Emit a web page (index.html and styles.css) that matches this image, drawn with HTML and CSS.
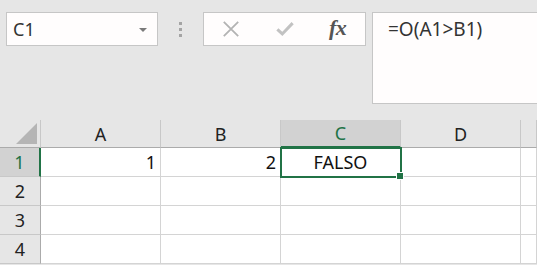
FILE: index.html
```html
<!DOCTYPE html>
<html lang="es">
<head>
    <meta charset="UTF-8">
    <title>Hoja de cálculo</title>
    <link rel="stylesheet" href="styles.css">
</head>
<body>
    <div class="toolbar">
        <div class="name-box">
            <span class="name-value">C1</span>
            <span class="name-arrow"></span>
        </div>
        <div class="grip">
            <span></span><span></span><span></span>
        </div>
        <div class="buttons">
            <svg class="btn-icon" viewBox="0 0 20 20">
                <path d="M2 2 L18 18 M18 2 L2 18" stroke="#b3b3b3" stroke-width="2" fill="none"/>
            </svg>
            <svg class="btn-icon" viewBox="0 0 20 20">
                <path d="M1.5 10.5 L7 15.5 L18.5 3.5" stroke="#c2c2c2" stroke-width="3.4" fill="none"/>
            </svg>
            <span class="fx">fx</span>
        </div>
        <div class="formula">=O(A1&gt;B1)</div>
    </div>

    <div class="sheet">
        <div class="corner"><span class="corner-mark"></span></div>
        <div class="col-head">A</div>
        <div class="col-head">B</div>
        <div class="col-head active">C</div>
        <div class="col-head">D</div>
        <div class="col-head"></div>

        <div class="row-head active">1</div>
        <div class="cell num">1</div>
        <div class="cell num">2</div>
        <div class="cell text selected">FALSO</div>
        <div class="cell"></div>
        <div class="cell"></div>

        <div class="row-head">2</div>
        <div class="cell"></div>
        <div class="cell"></div>
        <div class="cell"></div>
        <div class="cell"></div>
        <div class="cell"></div>

        <div class="row-head">3</div>
        <div class="cell"></div>
        <div class="cell"></div>
        <div class="cell"></div>
        <div class="cell"></div>
        <div class="cell"></div>

        <div class="row-head">4</div>
        <div class="cell"></div>
        <div class="cell"></div>
        <div class="cell"></div>
        <div class="cell"></div>
        <div class="cell"></div>
    </div>
</body>
</html>
```

FILE: styles.css
```css
* {
    margin: 0;
    padding: 0;
    box-sizing: border-box;
}

body {
    font-family: "Noto Sans", "Open Sans", sans-serif;
    background-color: #e6e6e6;
    color: #222;
    width: 537px;
    height: 265px;
    overflow: hidden;
}

/* formula toolbar */
.toolbar {
    display: flex;
    align-items: flex-start;
    height: 120px;
    padding: 12px 0 0 6px;
}

.name-box {
    width: 152px;
    height: 34px;
    background: #fffdfd;
    border: 1px solid #c6c6c6;
    display: flex;
    align-items: center;
    justify-content: space-between;
    padding: 0 10px 0 6px;
}

.name-value {
    font-size: 18px;
    color: #333;
}

.name-arrow {
    width: 0;
    height: 0;
    border-left: 4px solid transparent;
    border-right: 4px solid transparent;
    border-top: 4px solid #7a7a7a;
    margin-top: 2px;
}

.grip {
    width: 45px;
    height: 34px;
    display: flex;
    flex-direction: column;
    align-items: center;
    justify-content: center;
    gap: 3px;
}

.grip span {
    width: 3px;
    height: 3px;
    background: #a4a4a4;
}

.buttons {
    width: 163px;
    height: 34px;
    background: #fffdfd;
    border: 1px solid #c6c6c6;
    display: flex;
    align-items: center;
    padding-left: 18px;
    gap: 36px;
}

.btn-icon {
    width: 18px;
    height: 18px;
}

.fx {
    font-family: "Liberation Serif", "DejaVu Serif", serif;
    font-style: italic;
    font-weight: bold;
    font-size: 22px;
    color: #555;
    letter-spacing: -0.5px;
    margin-left: -1px;
    margin-top: -3px;
}

.formula {
    flex: 1;
    height: 92px;
    margin-left: 6px;
    margin-right: -2px;
    background: #fffdfd;
    border: 1px solid #c6c6c6;
    padding: 3px 0 0 15px;
    font-size: 19px;
    color: #333;
}

/* sheet grid */
.sheet {
    display: grid;
    grid-template-columns: 41px 120px 120px 120px 120px 1fr;
    grid-template-rows: 28px repeat(4, 29px);
    background: #fff;
}

.corner {
    background: #e6e6e6;
    border-right: 1px solid #c8c8c8;
    border-bottom: 1px solid #ababab;
    display: flex;
    align-items: flex-end;
    justify-content: flex-end;
    padding: 0 3px 3px 0;
}

.corner-mark {
    width: 21px;
    height: 21px;
    background: #b5b5b5;
    clip-path: polygon(100% 0, 100% 100%, 0 100%);
}

.col-head {
    background: #e6e6e6;
    border-right: 1px solid #c8c8c8;
    border-bottom: 1px solid #ababab;
    display: flex;
    align-items: center;
    justify-content: center;
    font-size: 18px;
    color: #222;
}

.col-head.active {
    background: #d2d2d2;
    color: #217346;
    border-bottom: 2px solid #217346;
}

.row-head {
    background: #e6e6e6;
    border-right: 1px solid #ababab;
    border-bottom: 1px solid #c8c8c8;
    display: flex;
    align-items: center;
    justify-content: center;
    font-size: 18px;
    color: #222;
}

.row-head.active {
    background: #d2d2d2;
    color: #217346;
    border-right: 2px solid #217346;
}

.cell {
    border-right: 1px solid #d4d4d4;
    border-bottom: 1px solid #d4d4d4;
    display: flex;
    align-items: center;
    font-size: 18px;
    color: #111;
}

.cell.num {
    justify-content: flex-end;
    padding-right: 4px;
}

.cell.text {
    justify-content: center;
}

.cell.selected {
    position: relative;
    z-index: 1;
    outline: 2px solid #217346;
    outline-offset: -1px;
}

.cell.selected::after {
    content: "";
    position: absolute;
    right: -4px;
    bottom: -4px;
    width: 6px;
    height: 6px;
    background: #217346;
    border: 1px solid #fff;
    box-sizing: content-box;
}
```
